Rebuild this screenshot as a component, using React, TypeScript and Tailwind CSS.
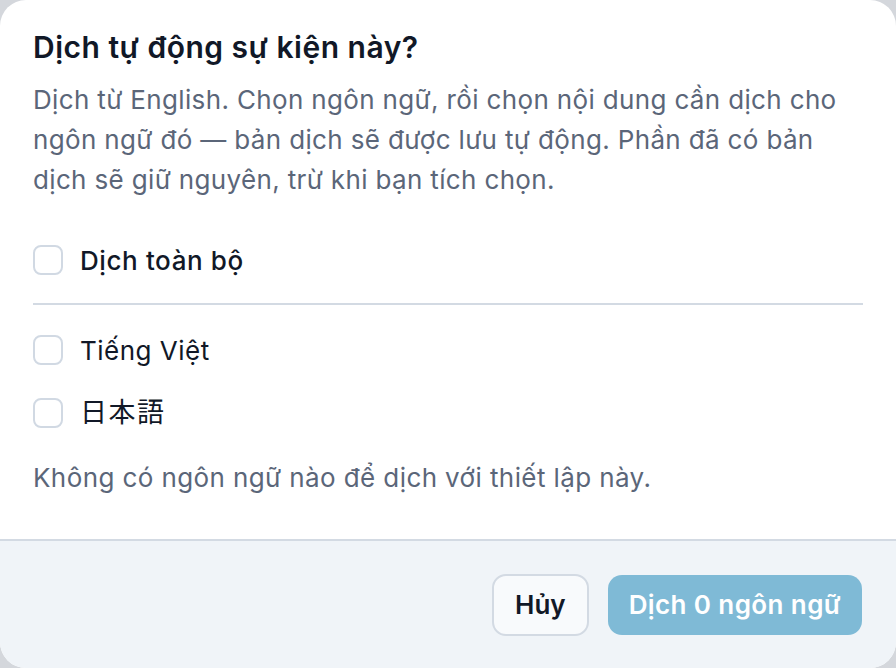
export default function App() {
  const langs = [
    { label: "Tiếng Việt", cls: "text-[26px] tracking-[0.5px]" },
    { label: "日本語", cls: "text-[27px] tracking-[1.5px]" },
  ];

  return (
    <div
      className="h-[668px] w-[896px] bg-[#d4d7dc]"
      style={{ fontFamily: 'Inter, "Noto Sans CJK JP", sans-serif' }}
    >
      <div className="flex h-full flex-col overflow-hidden rounded-[26px] bg-white">
        <div className="flex-1 px-[33px] pt-[28px]">
          <h2 className="text-[30px] leading-[38px] font-semibold tracking-[0.5px] text-[#111827]">
            Dịch tự động sự kiện này?
          </h2>
          <p className="mt-[14px] text-[26px] leading-[40px] tracking-[0.35px] text-[#5b6679]">
            Dịch từ English. Chọn ngôn ngữ, rồi chọn nội dung cần dịch cho
            <br />
            ngôn ngữ đó — bản dịch sẽ được lưu tự động. Phần đã có bản
            <br />
            dịch sẽ giữ nguyên, trừ khi bạn tích chọn.
          </p>

          <label className="mt-[40px] flex h-[40px] items-center gap-[17px]">
            <span className="h-[30px] w-[30px] rounded-[8px] border-2 border-[#d1d9e3] bg-white" />
            <span className="text-[26px] font-medium tracking-[0.6px] text-[#111827]">Dịch toàn bộ</span>
          </label>

          <div className="mt-[23px] h-[2px] bg-[#d3dae3]" />

          <div className="mt-[25px] flex flex-col gap-[23px]">
            {langs.map((l) => (
              <label key={l.label} className="flex h-[40px] items-center gap-[17px]">
                <span className="h-[30px] w-[30px] rounded-[8px] border-2 border-[#d1d9e3] bg-white" />
                <span className={`${l.cls} text-[#111827]`}>{l.label}</span>
              </label>
            ))}
          </div>

          <p className="mt-[25px] text-[26px] leading-[40px] tracking-[0.4px] text-[#5b6679]">
            Không có ngôn ngữ nào để dịch với thiết lập này.
          </p>
        </div>

        <div className="flex h-[129px] items-center justify-end gap-[19px] border-t-2 border-[#d3dae3] bg-[#f0f4f8] px-[34px]">
          <button className="h-[62px] rounded-[14px] border-2 border-[#d3dae3] bg-[#f8fafc] px-[21px] text-[26px] font-semibold text-[#111827]">
            Hủy
          </button>
          <button className="h-[60px] rounded-[14px] bg-[#7fbad6] px-[21px] text-[26px] font-semibold tracking-[0.4px] text-white">
            Dịch 0 ngôn ngữ
          </button>
        </div>
      </div>
    </div>
  );
}
